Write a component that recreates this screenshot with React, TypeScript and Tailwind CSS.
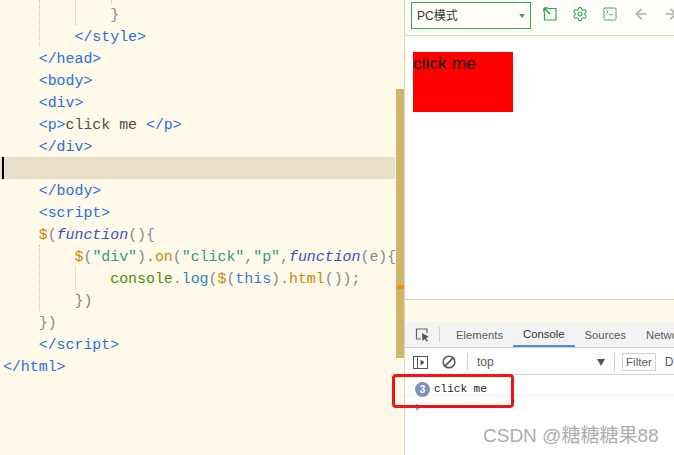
import React from 'react';
import { ArrowLeft, ArrowRight, Ban, Settings, SquareTerminal } from 'lucide-react';

const T = ({ c, children }: { c: string; children: React.ReactNode }) => <span className={c}>{children}</span>;

const tag = 'text-[#2a6fd8]';
const punc = 'text-[#7d8a96]';
const plain = 'text-[#4d4d4d]';
const gold = 'text-[#c98a10]';
const teal = 'text-[#2a9a8c]';

const lines: { indent: number; content: React.ReactNode; active?: boolean }[] = [
  { indent: 12, content: <T c="text-[#8a8a7a]">{'}'}</T> },
  { indent: 8, content: <T c={tag}>{'</style>'}</T> },
  { indent: 4, content: <T c={tag}>{'</head>'}</T> },
  { indent: 4, content: <T c={tag}>{'<body>'}</T> },
  { indent: 4, content: <T c={tag}>{'<div>'}</T> },
  {
    indent: 4,
    content: (
      <>
        <T c={tag}>{'<p>'}</T>
        <T c={plain}>click me </T>
        <T c={tag}>{'</p>'}</T>
      </>
    ),
  },
  { indent: 4, content: <T c={tag}>{'</div>'}</T> },
  { indent: 0, content: '', active: true },
  { indent: 4, content: <T c={tag}>{'</body>'}</T> },
  { indent: 4, content: <T c={tag}>{'<script>'}</T> },
  {
    indent: 4,
    content: (
      <>
        <T c={gold}>$</T>
        <T c={punc}>(</T>
        <T c="italic text-[#3a4fc0]">function</T>
        <T c={punc}>(){'{'}</T>
      </>
    ),
  },
  {
    indent: 8,
    content: (
      <>
        <T c={gold}>$</T>
        <T c={punc}>(</T>
        <T c={teal}>"div"</T>
        <T c={punc}>).</T>
        <T c={gold}>on</T>
        <T c={punc}>(</T>
        <T c={teal}>"click"</T>
        <T c={punc}>,</T>
        <T c={teal}>"p"</T>
        <T c={punc}>,</T>
        <T c="italic text-[#3a4fc0]">function</T>
        <T c={punc}>(e){'{'}</T>
      </>
    ),
  },
  {
    indent: 12,
    content: (
      <>
        <T c="text-[#4f8a10]">console</T>
        <T c={punc}>.</T>
        <T c="text-[#2f7fd0]">log</T>
        <T c={punc}>(</T>
        <T c={gold}>$</T>
        <T c={punc}>(</T>
        <T c="text-[#2f7fd0]">this</T>
        <T c={punc}>).</T>
        <T c={gold}>html</T>
        <T c={punc}>());</T>
      </>
    ),
  },
  { indent: 8, content: <T c={punc}>{'})'}</T> },
  { indent: 4, content: <T c={punc}>{'})'}</T> },
  { indent: 4, content: <T c={tag}>{'</script>'}</T> },
  { indent: 0, content: <T c={tag}>{'</html>'}</T> },
];

const guides = [
  { x: 39, top: 0, h: 46 },
  { x: 75, top: 0, h: 25 },
  { x: 111, top: 0, h: 3 },
  { x: 39, top: 245, h: 66 },
  { x: 75, top: 267, h: 22 },
];

function Editor() {
  return (
    <div className="relative w-[404px] h-full shrink-0 overflow-hidden bg-[#fef9e8] pt-[3px] font-['Liberation_Mono',monospace] text-[14.9px] leading-[22px]">
      {lines.map((l, i) => (
        <div
          key={i}
          className={l.active ? 'relative h-[22px] w-[395px] whitespace-pre pl-[3px] bg-[#e8e0c6]' : 'h-[22px] w-[395px] whitespace-pre pl-[3px] pt-px'}
        >
          {l.active && <div className="absolute left-[2px] top-0 h-full w-[2px] bg-black" />}
          {' '.repeat(l.indent)}
          {l.content}
        </div>
      ))}
      {guides.map((g, i) => (
        <div
          key={i}
          className="absolute border-l border-dotted border-[#c9c6b8]"
          style={{ left: g.x, top: g.top, height: g.h }}
        />
      ))}
      {/* scrollbar overlay */}
      <div className="absolute left-[396px] top-[89px] h-[269px] w-[8px] bg-[#cdb56c]">
        <div className="absolute left-[1px] top-[196px] h-[4px] w-[7px] bg-[#e8900c]" />
      </div>
    </div>
  );
}

function PreviewBar() {
  return (
    <div className="flex h-[36px] items-start border-b border-[#dfd6b8] bg-[#fffdf8] pl-[6px] pt-[2px]">
      <div className="flex h-[27px] w-[120px] shrink-0 items-center justify-between border border-[#3aa757] pl-[5px] pr-[5px] font-['Liberation_Sans','Noto_Sans_CJK_SC',sans-serif] text-[12px] text-[#333]">
        <span>PC模式</span>
        <span className="h-0 w-0 border-x-[3px] border-t-[4px] border-x-transparent border-t-[#3aa757]" />
      </div>
      <div className="ml-[12px] flex items-center gap-[14.5px] pt-[4px] text-[#2fa85a]">
        <svg width="14" height="14" viewBox="0 0 14 14" fill="none" stroke="currentColor" strokeWidth="1.2" className="shrink-0">
          <path d="M5 1.5H13V13H1.5V5" />
          <path d="M1 1L7 7M1 1H5M1 1V5" strokeWidth="1.6" />
        </svg>
        <Settings size={16} strokeWidth={1.6} className="shrink-0" />
        <SquareTerminal size={16} strokeWidth={1.4} className="shrink-0" />
        <ArrowLeft size={16} strokeWidth={2.6} className="shrink-0 text-[#b0b0b0]" />
        <ArrowRight size={16} strokeWidth={2.6} className="shrink-0 text-[#b0b0b0]" />
      </div>
    </div>
  );
}

function Page() {
  return (
    <div className="h-[263px] bg-white pl-[8px] pt-[16px]">
      <div className="h-[60px] w-[100px] bg-[#ff0000] font-['Liberation_Sans',sans-serif] text-[17.4px] leading-[22px] text-[#111]">click me</div>
    </div>
  );
}

function DevTools() {
  return (
    <div className="flex-1 bg-white font-['Liberation_Sans',sans-serif] text-[12px]">
      <div className="flex h-[26px] items-stretch border-b border-[#cfcfcf] bg-[#f3f3f3] text-[11.3px] text-[#5a5a5a]">
        <div className="flex w-[34px] items-center pl-[10px]">
          <svg width="15" height="15" viewBox="0 0 15 15" fill="none">
            <path d="M6 12H1.5V2H12V6" stroke="#666" strokeWidth="1.2" />
            <path d="M7 6L14 10L11 11L13 14L11.5 14.5L10 12L7.5 14Z" fill="#555" />
          </svg>
        </div>
        <div className="my-[5px] w-px bg-[#cfcfcf]" />
        <div className="flex min-w-0 flex-1 overflow-hidden whitespace-nowrap pl-[6px]">
          <span className="flex items-center px-[10px] pt-[2px]">Elements</span>
          <span className="flex items-center border-b-2 border-[#4d8ae8] px-[10px] pt-[2px] text-[#333]">Console</span>
          <span className="flex items-center px-[10px] pt-[2px]">Sources</span>
          <span className="flex items-center px-[10px] pt-[2px]">Network</span>
        </div>
      </div>
      <div className="flex h-[27px] items-center border-b border-[#d4d4d4] pl-[8px] pt-[2px] text-[#5a5a5a]">
        <svg width="15" height="13" viewBox="0 0 15 13" fill="none" className="shrink-0">
          <rect x="0.5" y="0.5" width="14" height="12" stroke="#555" />
          <path d="M4.5 1V12" stroke="#555" />
          <path d="M7.5 3.5L11.5 6.5L7.5 9.5Z" fill="#555" />
        </svg>
        <Ban size={14} strokeWidth={2.6} className="ml-[14px] shrink-0 -scale-x-100 text-[#555]" />
        <div className="ml-[11px] h-[18px] w-px shrink-0 bg-[#cfcfcf]" />
        <span className="ml-[9px] w-[120px] shrink-0">top</span>
        <span className="h-0 w-0 shrink-0 border-x-[4px] border-t-[7px] border-x-transparent border-t-[#555]" />
        <div className="ml-[9px] h-[18px] w-px shrink-0 bg-[#cfcfcf]" />
        <div className="ml-[7px] shrink-0 border border-[#d0d0d0] px-[3px] text-[11.6px] leading-[16px]">Filter</div>
        <span className="ml-[9px] shrink-0">D</span>
      </div>
      <div className="flex h-[21px] items-center border-b border-[#eeeeee] pl-[10px] pt-[8px] font-['Liberation_Mono',monospace] text-[11px] text-[#222]">
        <span className="mr-[4px] flex h-[15px] w-[15px] items-center justify-center rounded-full bg-[#7c93bd] font-['Liberation_Sans',sans-serif] text-[10px] font-bold text-white">3</span>
        click me
      </div>
      <div className="pl-[10px] pt-[3px] font-['Liberation_Sans',sans-serif] text-[14px] font-bold leading-[14px] text-[#4d7fe0]">›</div>
    </div>
  );
}

export default function App() {
  return (
    <div className="relative flex h-[455px] w-[674px] overflow-hidden bg-white">
      <Editor />
      <div className="flex h-full min-w-0 flex-1 flex-col border-l border-[#ddd5bb]">
        <PreviewBar />
        <Page />
        <div className="h-[23px] border-t border-[#dfd6b8] bg-[#fef9e8]" />
        <DevTools />
      </div>
      {/* annotation + watermark lie over the page */}
      <div className="absolute left-[392px] top-[374px] h-[34px] w-[122px] rounded-[4px] border-[3px] border-[#f01414]" />
      <div className="absolute left-[483px] top-[424px] font-['Liberation_Sans','Noto_Sans_CJK_SC',sans-serif] text-[19px] leading-[24px] text-[#adadad]">CSDN @糖糖糖果88</div>
    </div>
  );
}
